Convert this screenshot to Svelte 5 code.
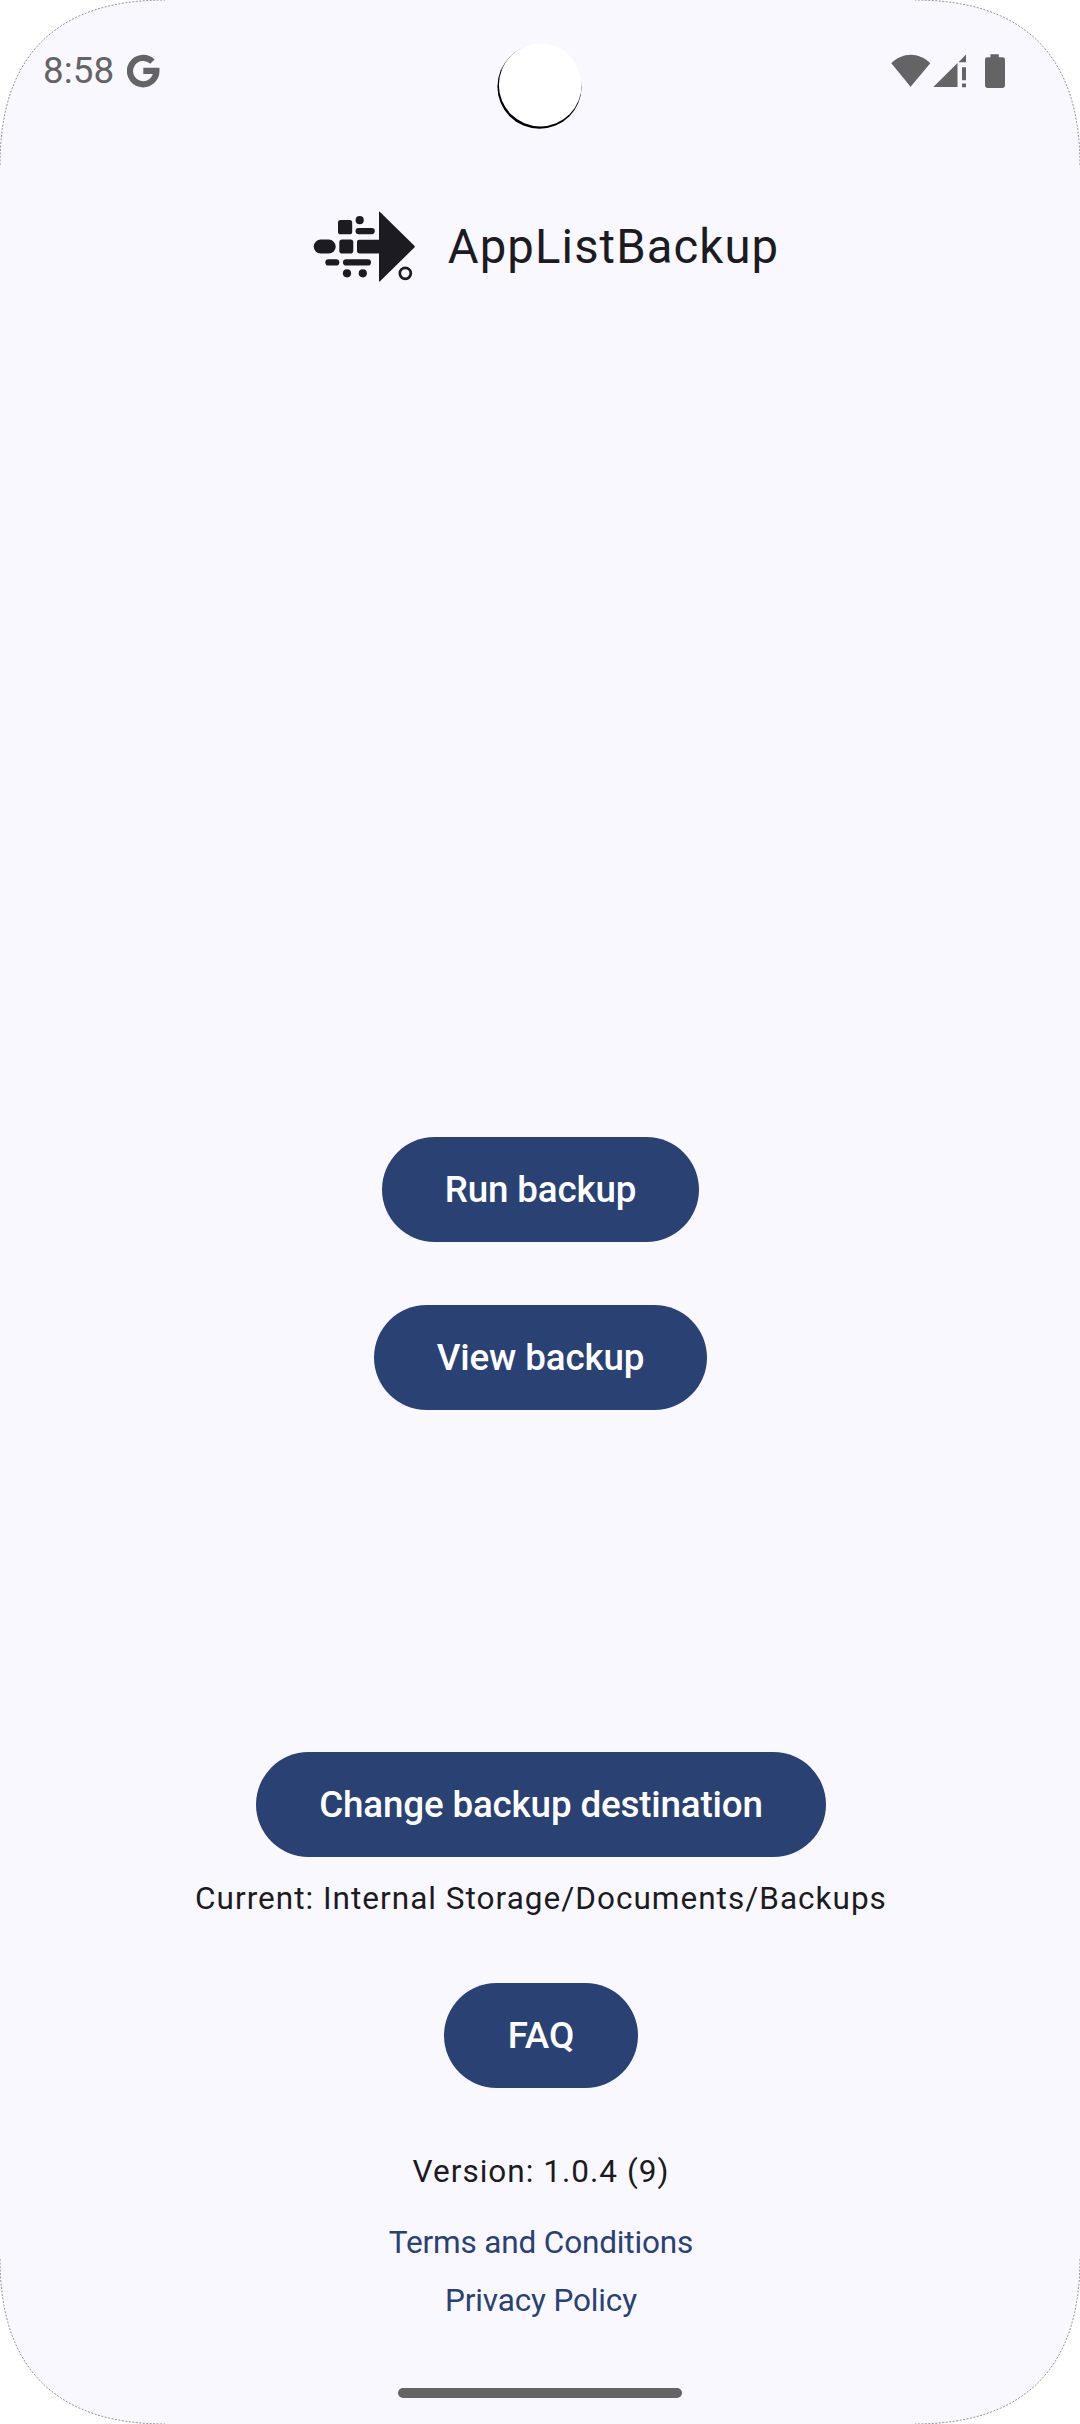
<script>
  const actions = ['Run backup', 'View backup'];
  const corners = ['tl', 'tr', 'bl', 'br'];
</script>

<div class="screen">
  <header class="status">
    <div class="left">
      <span class="clock">8:58</span>
      <svg width="34" height="34" viewBox="0 0 34 34" fill="none" stroke="#646466" stroke-width="6.2">
        <path d="M25.4 7.6A13.2 13.2 0 1 0 29.4 16.9H16.3" />
      </svg>
    </div>
    <svg width="116" height="36" viewBox="0 0 116 36" fill="#646466">
      <path d="M0.3 9.2C11.5-2.2 27.9-2.2 39.3 9.2L19.6 32.8Z" />
      <path d="M42.3 33L66.5 9V33ZM67.5 8.2L75 0.6V8.2Z" />
      <path d="M71 13.3h4v13h-4zM71 29.4h4v3.8h-4z" />
      <path d="M99.4 0.3h8.4v3h3.9q2.3 0 2.3 2.3v26q0 2.3-2.3 2.3H96.3q-2.3 0-2.3-2.3V5.6q0-2.3 2.3-2.3h3.100z" />
    </svg>
  </header>

  <div class="brand">
    <svg width="103" height="72" viewBox="0 0 103 72" fill="#1b1b21">
      <path d="M66 1.5Q66 0 67 1L101.4 34.7Q102.3 35.6 101.4 36.5L67 70.3Q66 71.2 66 69.7Z" />
      <rect x="25" y="9" width="14.2" height="14.3" rx="2.6" />
      <circle cx="46.7" cy="9.2" r="4.1" />
      <rect x="42.5" y="17" width="19.3" height="6.2" rx="3.1" />
      <rect x="0.7" y="28.6" width="22" height="14" rx="7" />
      <rect x="26.3" y="28.6" width="14" height="14" rx="2.8" />
      <rect x="44" y="28.7" width="24" height="13.8" rx="2.4" />
      <rect x="12.3" y="48.3" width="14" height="6.2" rx="3.1" />
      <rect x="30" y="48.3" width="28" height="6.2" rx="3.1" />
      <circle cx="34" cy="62.3" r="4.1" />
      <circle cx="49.8" cy="62.3" r="4.1" />
      <circle cx="92.3" cy="62.3" r="5.5" fill="none" stroke="#1b1b21" stroke-width="2.7" />
    </svg>
    <h1>AppListBackup</h1>
  </div>

  <main>
    {#each actions as label}
      <button>{label}</button>
    {/each}
  </main>

  <footer>
    <button>Change backup destination</button>
    <p class="current">Current: Internal Storage/Documents/Backups</p>
    <button class="faq">FAQ</button>
    <p class="version">Version: 1.0.4 (9)</p>
    <span class="link">Terms and Conditions</span>
    <span class="link">Privacy Policy</span>
  </footer>

  <div class="handle"></div>

  <svg class="camera" width="90" height="90" viewBox="0 0 90 90">
    <circle cx="44.5" cy="44.7" r="42.1" fill="#000" />
    <circle cx="45.3" cy="43" r="41.4" fill="#fff" />
  </svg>

  {#each corners as c}
    <svg class="corner {c}" width="172" height="172" viewBox="0 0 172 172">
      <path d="M0 165C0 56 56 0 165 0H0Z" fill="#fff" />
      <path d="M0 165C0 56 56 0 165 0" fill="none" stroke="#000" stroke-width="0.6" stroke-dasharray="2 1.5" stroke-opacity="0.7" />
    </svg>
  {/each}
</div>

<style>
  :global(body) {
    margin: 0;
    background: #fff;
  }

  .screen {
    position: relative;
    box-sizing: border-box;
    width: 1080px;
    height: 2424px;
    overflow: hidden;
    display: flex;
    flex-direction: column;
    align-items: center;
    background: #f9f8ff;
    color: #1b1b21;
    font-family: Roboto, sans-serif;
  }

  .status {
    box-sizing: border-box;
    width: 100%;
    height: 142px;
    padding: 54px 73px 0 43px;
    display: flex;
    justify-content: space-between;
    align-items: flex-start;
  }

  .left {
    display: flex;
    gap: 13px;
  }

  .clock {
    color: #646466;
    font-size: 36.75px;
    line-height: 34px;
    letter-spacing: 0.1px;
  }

  .brand {
    height: 210px;
    padding-left: 12px;
    display: flex;
    align-items: center;
    gap: 32px;
  }

  h1 {
    margin: 0;
    font-size: 47.25px;
    font-weight: 400;
    line-height: 63px;
    letter-spacing: 1.1px;
  }

  main {
    flex: 1;
    padding: 443px 0 0 1px;
    display: flex;
    flex-direction: column;
    align-items: center;
    justify-content: center;
    gap: 63px;
  }

  button {
    height: 105px;
    padding: 0 63px;
    border: 0;
    border-radius: 53px;
    background: #2a4173;
    color: #fff;
    font-family: inherit;
    font-size: 36.75px;
    font-weight: 500;
    line-height: 52px;
    letter-spacing: -0.15px;
  }

  .faq {
    min-width: 194px;
    letter-spacing: 0;
  }

  footer {
    display: flex;
    flex-direction: column;
    align-items: center;
    height: 636px;
    padding-left: 2px;
  }

  p {
    margin: 0;
    font-size: 31.5px;
    line-height: 42px;
    letter-spacing: 1.02px;
  }

  .current {
    margin: 21px 0 63px;
  }

  .version {
    margin: 63px 0 29px;
  }

  .link {
    color: #2a4173;
    font-size: 31.5px;
    line-height: 42px;
    letter-spacing: -0.15px;
    margin-bottom: 16px;
  }

  .handle {
    width: 284px;
    height: 10px;
    margin-bottom: 26px;
    border-radius: 5px;
    background: #646466;
  }

  .camera {
    position: absolute;
    left: 495px;
    top: 42px;
  }

  .corner {
    position: absolute;
  }

  .tl {
    left: 0;
    top: 0;
  }

  .tr {
    right: 0;
    top: 0;
    transform: scaleX(-1);
  }

  .bl {
    left: 0;
    bottom: 0;
    transform: scaleY(-1);
  }

  .br {
    right: 0;
    bottom: 0;
    transform: scale(-1);
  }
</style>
